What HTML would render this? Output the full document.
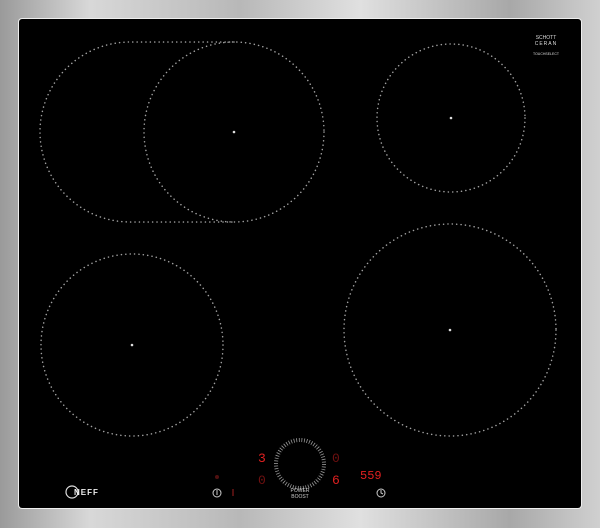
<!DOCTYPE html>
<html><head><style>
html,body{margin:0;padding:0}
body{width:600px;height:528px;overflow:hidden;background:linear-gradient(90deg,#9a9a9a,#d8d8d8 15%,#b8b8b8 40%,#e0e0e0 60%,#a8a8a8 85%,#d0d0d0);position:relative;font-family:"Liberation Sans",sans-serif}
.glass{position:absolute;left:19px;top:19px;width:562px;height:489px;background:#000;border-radius:3px;box-shadow:0 0 0 1px #eee}
svg{position:absolute;left:0;top:0}
</style></head><body>
<div class="glass"></div>
<svg width="600" height="528" viewBox="0 0 600 528">
<g fill="none" stroke="#a0a0a0" stroke-width="1.5" stroke-linecap="round" stroke-dasharray="0.1 4.3">
<path d="M234 42 L130 42 A90 90 0 0 0 130 222 L234 222"/>
<circle cx="234" cy="132" r="90"/>
<circle cx="451" cy="118" r="74"/>
<circle cx="132" cy="345" r="91"/>
<circle cx="450" cy="330" r="106"/>
</g>
<g fill="#ddd"><circle cx="234" cy="132" r="1.3"/><circle cx="451" cy="118" r="1.3"/><circle cx="132" cy="345" r="1.3"/><circle cx="450" cy="330" r="1.3"/></g>
<g fill="#ddd" font-size="5" text-anchor="middle"><text x="546" y="39">SCHOTT</text><text x="546" y="45" letter-spacing="1">CERAN</text><text x="546" y="55" font-size="3.5">TOUCHSELECT</text></g>
<circle cx="300" cy="464" r="24" fill="none" stroke="#999" stroke-width="4" stroke-dasharray="0.8 1.8"/>
<text x="300" y="492" fill="#ccc" font-size="5" text-anchor="middle">POWER</text>
<text x="300" y="498" fill="#ccc" font-size="5" text-anchor="middle">BOOST</text>
<g fill="#e02020" font-family="Liberation Mono,monospace">
<text x="258" y="462" font-size="13">3</text><text x="258" y="484" font-size="13" fill="#701010">0</text>
<text x="332" y="462" font-size="13" fill="#701010">0</text><text x="332" y="484" font-size="13">6</text>
<text x="360" y="479" font-size="12">559</text>
</g>
<circle cx="217" cy="477" r="2" fill="#501010"/>
<rect x="232" y="489" width="2" height="7" fill="#501010"/>
<g fill="none" stroke="#ccc" stroke-width="1"><circle cx="217" cy="493" r="4"/><circle cx="381" cy="493" r="4"/></g>
<path d="M217 490v5M381 490v3l2 1" stroke="#ccc" stroke-width="1"/>
<circle cx="72" cy="492" r="6" fill="none" stroke="#ddd" stroke-width="1.2"/>
<text x="74" y="495" fill="#eee" font-size="8" font-weight="bold" letter-spacing="1">NEFF</text>
</svg>
</body></html>
